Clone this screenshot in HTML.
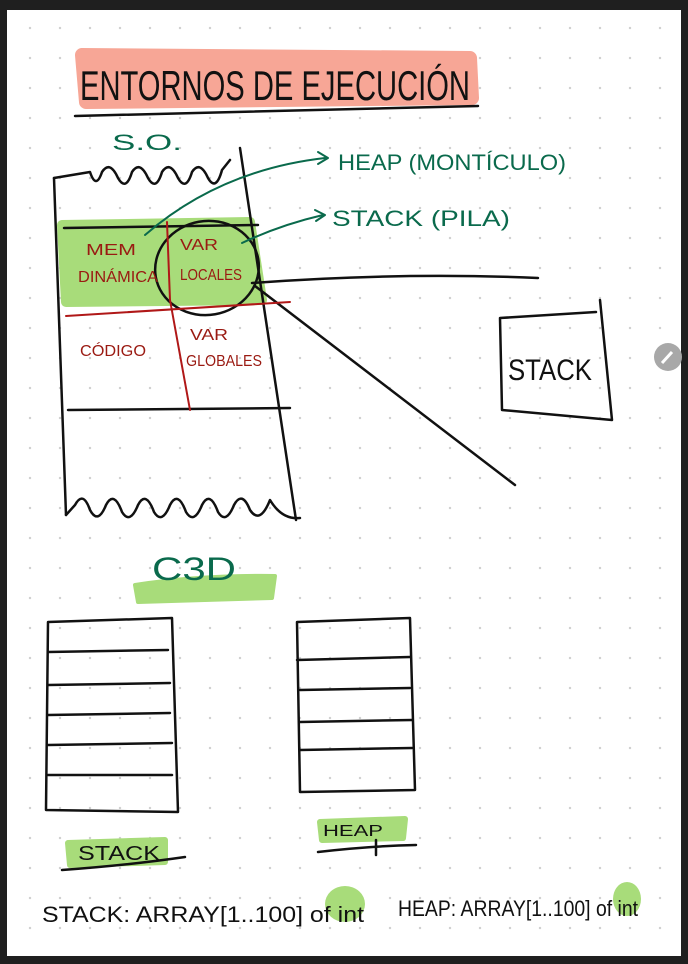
<!DOCTYPE html>
<html><head><meta charset="utf-8"><style>
html,body{margin:0;padding:0;background:#1f1f1f;}
#p{position:absolute;left:7px;top:10px;width:674px;height:946px;background:#fff;overflow:hidden;
background-image:radial-gradient(circle,#cfcfcf 1px,transparent 1.4px);background-size:30px 30px;background-position:8px 3px;}
svg{position:absolute;left:0;top:0}
text{font-family:"Liberation Sans",sans-serif;}
</style></head><body>
<div id="p"></div>
<svg width="688" height="964" viewBox="0 0 688 964">
<g fill="none" stroke-linecap="round" stroke-linejoin="round">
<path d="M82 55 L470 58 L472 98 L86 102 Z" fill="#f7a696" stroke="#f7a696" stroke-width="14"/>
<path d="M75 116 Q300 110 478 106" stroke="#111" stroke-width="2.5"/>
<path d="M62 225 L250 222 L262 300 L66 302 Z" fill="#a8dc7a" stroke="#a8dc7a" stroke-width="10"/>
<path d="M135 585 Q200 575 275 576 L272 598 Q200 600 138 602Z" fill="#a8dc7a" stroke="#a8dc7a" stroke-width="4"/>
<path d="M68 843 L165 840 L165 862 L70 865Z" fill="#a8dc7a" stroke="#a8dc7a" stroke-width="6"/>
<path d="M320 822 L405 819 L403 838 L322 840Z" fill="#a8dc7a" stroke="#a8dc7a" stroke-width="6"/>
<ellipse cx="345" cy="904" rx="20" ry="18" fill="#a8dc7a" stroke="none"/>
<ellipse cx="627" cy="899" rx="14" ry="17" fill="#a8dc7a" stroke="none"/>
<g stroke="#111" stroke-width="2.5">
<path d="M54 178 L66 515"/>
<path d="M240 148 L296 520"/>
<path d="M54 178 L90 172 Q96 190 102 172 Q110 160 118 178 Q126 192 132 172 Q140 160 148 178 Q156 192 162 172 Q170 160 178 178 Q186 192 192 172 Q200 160 208 178 Q216 192 222 170 L230 160"/>
<path d="M64 228 L258 225"/>
<path d="M68 410 L290 408"/>
<path d="M66 515 L75 505 Q83 490 90 510 Q98 525 106 505 Q114 490 122 512 Q130 525 138 505 Q146 490 154 512 Q162 525 170 505 Q178 490 186 512 Q194 525 202 505 Q210 490 218 512 Q226 525 234 505 Q242 490 250 510 Q260 525 270 500 Q282 520 300 518"/>
<ellipse cx="207" cy="268" rx="52" ry="47" transform="rotate(-10 207 268)"/>
<path d="M252 283 Q400 272 538 278"/>
<path d="M255 286 L515 485"/>
<path d="M500 318 L596 312 M500 318 L502 410 L612 420 L600 300"/>
</g>
<g stroke="#b01818" stroke-width="2">
<path d="M66 316 L290 302"/>
<path d="M167 222 L170 300 L190 410"/>
</g>
<g stroke="#0a6a4c" stroke-width="2">
<path d="M145 235 Q220 170 325 158"/><path d="M318 152 L328 158 L318 164"/>
<path d="M242 243 Q280 225 323 215"/><path d="M315 210 L325 215 L316 221"/>
</g>
<g stroke="#111" stroke-width="2.5">
<path d="M48 622 L172 618 L178 812 L46 810 Z"/>
<path d="M48 652 L168 650 M48 685 L170 683 M48 715 L170 713 M48 745 L172 743 M48 775 L172 775"/>
<path d="M297 622 L410 618 L415 790 L300 792 Z"/>
<path d="M297 660 L410 657 M300 690 L410 688 M300 722 L412 720 M300 750 L412 748"/>
<path d="M62 870 Q130 865 185 857"/>
<path d="M318 852 Q370 846 416 845 M376 840 L376 855"/>
</g>
</g>
<g fill="#111">
<text x="80" y="100" font-size="42" textLength="390" lengthAdjust="spacingAndGlyphs">ENTORNOS DE EJECUCIÓN</text>
<text x="508" y="380" font-size="30" textLength="84" lengthAdjust="spacingAndGlyphs">STACK</text>
<text x="78" y="860" font-size="20" textLength="82" lengthAdjust="spacingAndGlyphs">STACK</text>
<text x="323" y="836" font-size="16" textLength="60" lengthAdjust="spacingAndGlyphs">HEAP</text>
<text x="42" y="922" font-size="22" textLength="322" lengthAdjust="spacingAndGlyphs">STACK: ARRAY[1..100] of int</text>
<text x="398" y="916" font-size="22" textLength="240" lengthAdjust="spacingAndGlyphs">HEAP: ARRAY[1..100] of int</text>
</g>
<g fill="#0a6a4c">
<text x="112" y="150" font-size="22" textLength="70" lengthAdjust="spacingAndGlyphs">S.O.</text>
<text x="338" y="170" font-size="22" textLength="228" lengthAdjust="spacingAndGlyphs">HEAP (MONTÍCULO)</text>
<text x="332" y="226" font-size="22" textLength="178" lengthAdjust="spacingAndGlyphs">STACK (PILA)</text>
<text x="152" y="580" font-size="32" textLength="84" lengthAdjust="spacingAndGlyphs">C3D</text>
</g>
<g fill="#9a1a12" font-size="16">
<text x="86" y="255" textLength="50" lengthAdjust="spacingAndGlyphs">MEM</text>
<text x="78" y="282" textLength="80" lengthAdjust="spacingAndGlyphs">DINÁMICA</text>
<text x="180" y="250" textLength="38" lengthAdjust="spacingAndGlyphs">VAR</text>
<text x="180" y="280" textLength="62" lengthAdjust="spacingAndGlyphs">LOCALES</text>
<text x="80" y="356" textLength="66" lengthAdjust="spacingAndGlyphs">CÓDIGO</text>
<text x="190" y="340" textLength="38" lengthAdjust="spacingAndGlyphs">VAR</text>
<text x="186" y="366" textLength="76" lengthAdjust="spacingAndGlyphs">GLOBALES</text>
</g>
<circle cx="668" cy="357" r="14" fill="#a8a8a8"/>
<path d="M662 363 L672 352" stroke="#fff" stroke-width="3"/>
</svg>
</body></html>
